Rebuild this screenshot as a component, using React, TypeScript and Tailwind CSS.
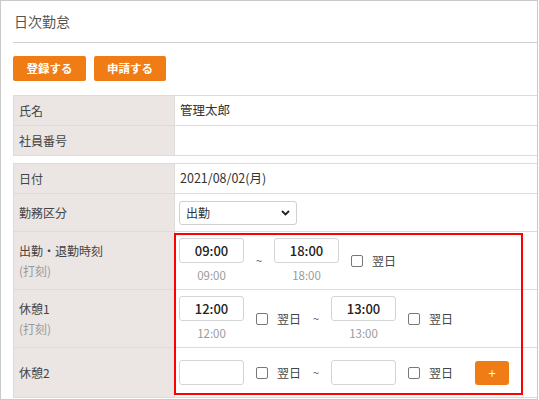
import * as React from "react";

const font = { fontFamily: '"Noto Sans CJK JP", "Noto Sans", sans-serif' };

// Time input box with optional stamped time below
const TimeBox = ({ value, stamp }: { value?: string; stamp?: string }) => (
  <div className="flex flex-col items-center">
    <div className="w-[65px] h-[25px] border border-[#d4d4d4] rounded-[3px] bg-white flex items-center justify-center text-[13px] font-medium text-[#222]">
      {value}
    </div>
    {stamp !== undefined && (
      <div className="mt-[4px] text-[11.5px] leading-[16px] text-[#9a9a9a]">{stamp}</div>
    )}
  </div>
);

const NextDay = () => (
  <div className="flex items-center ml-3">
    <span className="w-[12px] h-[12px] border border-[#777] rounded-[2px] bg-white" />
    <span className="ml-[9px] text-[12px] text-[#444]">翌日</span>
  </div>
);

const Tilde = () => (
  <span className="w-[30px] text-center text-[11px] text-[#555]">~</span>
);

type Row = {
  label: string;
  sub?: string;
  h: string;
  content: React.ReactNode;
};

const Table = ({ rows }: { rows: Row[] }) => (
  <div className="border border-[#dcdcdc] w-[540px]">
    {rows.map((r, i) => (
      <div key={i} className={`flex ${r.h} ${i > 0 ? "border-t border-[#dcdcdc]" : ""}`}>
        <div className="w-[161px] shrink-0 bg-[#ebe5e3] border-r border-[#dcdcdc] pl-[5px] flex flex-col justify-center">
          <div className="text-[12px] text-[#444] leading-[18px]">{r.label}</div>
          {r.sub && <div className="text-[12px] text-[#9a9a9a] leading-[18px] mt-[2px]">{r.sub}</div>}
        </div>
        <div className="flex-1 flex items-center pl-[4px] text-[12.5px] text-[#333]">{r.content}</div>
      </div>
    ))}
  </div>
);

export default function App() {
  const rows1: Row[] = [
    { label: "氏名", h: "h-[29px]", content: <span className="ml-[1px]">管理太郎</span> },
    { label: "社員番号", h: "h-[30px]", content: null },
  ];

  const rows2: Row[] = [
    { label: "日付", h: "h-[29px]", content: <span className="ml-[1px]">2021/08/02(月)</span> },
    {
      label: "勤務区分",
      h: "h-[38px]",
      content: (
        <div className="w-[118px] h-[24px] border border-[#d0d0d0] rounded-[3px] flex items-center justify-between px-[6px]">
          <span className="text-[12px] text-[#333]">出勤</span>
          <svg width="9" height="6" viewBox="0 0 9 6">
            <path d="M1 1l3.5 3.5L8 1" stroke="#222" strokeWidth="1.8" fill="none" />
          </svg>
        </div>
      ),
    },
    {
      label: "出勤・退勤時刻",
      sub: "(打刻)",
      h: "h-[58px]",
      content: (
        <>
          <TimeBox value="09:00" stamp="09:00" />
          <Tilde />
          <TimeBox value="18:00" stamp="18:00" />
          <NextDay />
        </>
      ),
    },
    {
      label: "休憩1",
      sub: "(打刻)",
      h: "h-[58px]",
      content: (
        <>
          <TimeBox value="12:00" stamp="12:00" />
          <NextDay />
          <Tilde />
          <TimeBox value="13:00" stamp="13:00" />
          <NextDay />
        </>
      ),
    },
    {
      label: "休憩2",
      h: "h-[50px]",
      content: (
        <>
          <TimeBox />
          <NextDay />
          <Tilde />
          <TimeBox />
          <NextDay />
          <button className="ml-[22px] w-[34px] h-[24px] bg-[#ef7c14] rounded-[3px] text-white text-[13px] flex items-center justify-center">
            +
          </button>
        </>
      ),
    },
  ];

  return (
    <div style={font} className="w-[539px] h-[400px] bg-white">
      <div className="relative w-[538px] h-[400px] border border-[#c9c9c9] overflow-hidden pl-[12px]">
        <div className="h-[42px] border-b border-[#cfcfcf] flex items-center pl-[1px] text-[14px] text-[#555]">
          日次勤怠
        </div>
        <div className="flex gap-[8px] mt-[13px]">
          <button className="w-[73px] h-[25px] bg-[#ef7c14] rounded-[2px] text-white text-[11.5px] font-bold">
            登録する
          </button>
          <button className="w-[72px] h-[25px] bg-[#ef7c14] rounded-[2px] text-white text-[11.5px] font-bold">
            申請する
          </button>
        </div>
        <div className="mt-[14px]">
          <Table rows={rows1} />
        </div>
        <div className="mt-[7px]">
          <Table rows={rows2} />
        </div>
        <div className="absolute left-[173px] top-[232px] w-[349px] h-[162px] border-2 border-[#ff0000]" />
      </div>
    </div>
  );
}
